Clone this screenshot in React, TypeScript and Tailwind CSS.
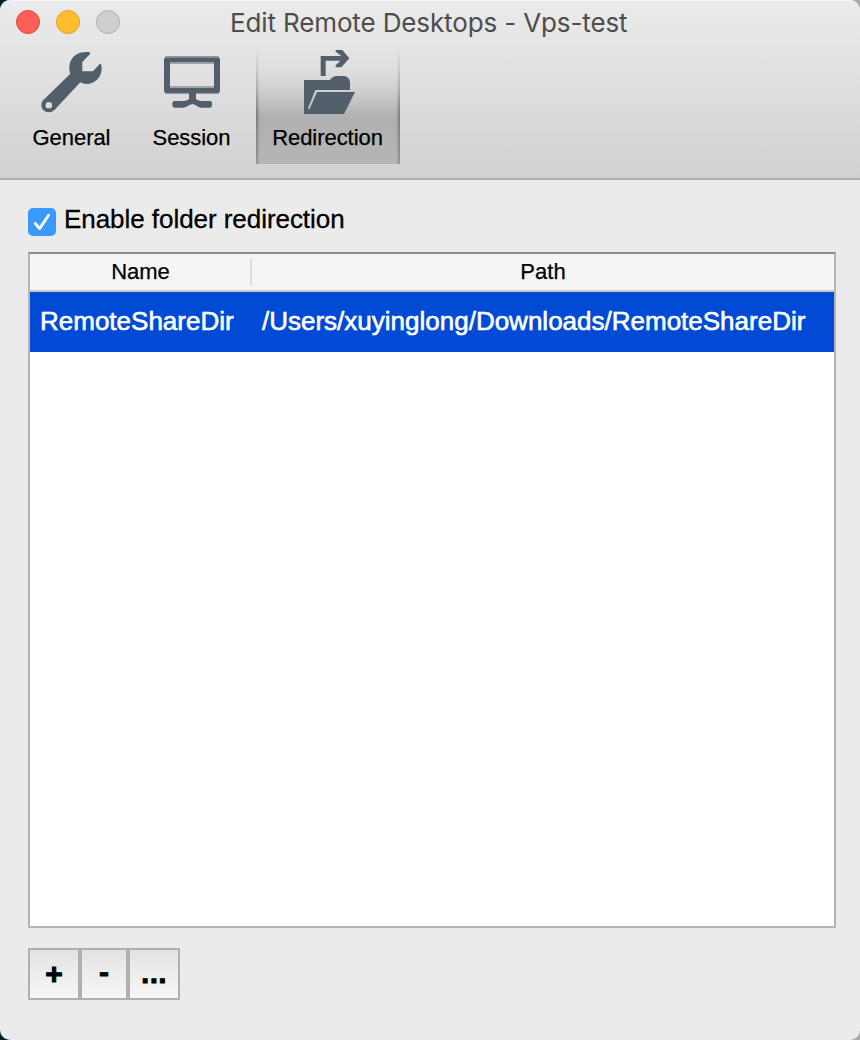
import React from "react";

function Wrench() {
  return (
    <svg className="block h-16 w-16" viewBox="120 150 192 192" fill="#535e6b">
      <path
        fillRule="evenodd"
        d="M270 157C246 153 225 161 214 179C206 194 207 207 211 221L131 299C122 307 122 320 129 329C139 339 154 339 164 329L241 247C257 255 276 253 290 240C303 228 308 210 303 192H299L279 214H247V186L270 162ZM141 307h11l4 4v10l-4 4h-11l-4-4v-10z"
      />
    </svg>
  );
}

function Monitor() {
  return (
    <svg className="block h-16 w-16" viewBox="60 30 192 192" fill="#535e6b">
      <path fill="#8d949b" d="M76 48h160v6H76zM76 156h160v6H76z" />
      <path
        fillRule="evenodd"
        d="M75 53h162l3 3v98l-3 4H75l-3-4V56zM90 66v78h132V66z"
      />
      <path fill="#9da2a8" d="M90 66h132v6H90zM90 138h132v6H90z" />
      <path d="M147 157h21v20c5 5 12 6 20 6h24c6 4 6 16 0 20h-29c-10-1-17-10-26-11-9 1-16 10-26 11h-29c-7-4-7-16 0-20h25c8 0 15-1 20-6z" />
    </svg>
  );
}

function FolderRedirect() {
  return (
    <svg className="block h-16 w-16" viewBox="168 30 192 192" fill="#535e6b">
      <path d="M242 108V48h62L287 35V30h20l21 25-24 27h-17v-6l14-14h-44v46z" />
      <path d="M192 120h78c6-8 12-12 20-12h22c12 2 18 10 18 22v20H226L204 204l4 5L231 156h114L312 222H192z" />
    </svg>
  );
}

type ToolProps = { label: string; active?: boolean; children: React.ReactNode };

function Tool({ label, active, children }: ToolProps) {
  return (
    <button
      className={
        active
          ? "flex h-[114px] w-36 flex-col items-center bg-[linear-gradient(rgba(227,227,227,.95),rgba(227,227,227,0)_55%,rgba(181,181,181,.4)),linear-gradient(90deg,rgba(0,0,0,.28)_0px,rgba(0,0,0,.28)_2px,rgba(0,0,0,.08)_2px,transparent_5px,transparent_139px,rgba(0,0,0,.08)_142px,rgba(0,0,0,.28)_142px),linear-gradient(#e3e3e3,#b0b0b0_60%,#b5b5b5)]"
          : "flex h-[114px] w-[120px] flex-col items-center"
      }
    >
      {children}
      <span className="mt-[10px] pr-px text-[22px] leading-7 tracking-[-0.05px] text-black [-webkit-text-stroke:0.25px_#000]">{label}</span>
    </button>
  );
}

export default function App() {
  return (
    <div className="h-[1040px] w-[860px] bg-[#04202a] bg-[linear-gradient(90deg,#04202a_50%,#aaaaaa_50%)] font-['Liberation_Sans',Arial,sans-serif] text-black">
      <main className="flex h-full flex-col overflow-hidden rounded-[10px] bg-[#ebebeb]">
        <header className="h-[180px] shrink-0 border-b-2 border-[#b1b1b1] bg-[linear-gradient(#f6f6f6_0px,#ebebeb_2px,#d1d1d1_178px)]">
          <div className="grid h-[50px] grid-cols-[230px_1fr] items-start">
            <div className="flex gap-4 pt-[10px] pl-4">
              <i className="size-6 rounded-full border border-[#e2463f] bg-[#ff5f57]" />
              <i className="size-6 rounded-full border border-[#dfa023] bg-[#ffbd2e]" />
              <i className="size-6 rounded-full border border-[#b0b0b0] bg-[#cecece]" />
            </div>
            <h1 className="pt-[7px] font-[Inter,sans-serif] text-[26px] leading-8 font-normal tracking-[-0.13px] whitespace-nowrap text-[#4d4d4d]">
              Edit Remote Desktops - Vps-test
            </h1>
          </div>
          <nav className="flex pl-3">
            <Tool label="General"><Wrench /></Tool>
            <Tool label="Session"><Monitor /></Tool>
            <div className="w-1" />
            <Tool label="Redirection" active><FolderRedirect /></Tool>
          </nav>
        </header>

        <label className="mt-6 flex h-8 items-start pl-7">
          <span className="mt-1 flex size-7 items-center justify-center rounded-[5px] bg-[#3b99fc]">
            <svg className="size-7" viewBox="0 0 28 28" fill="none" stroke="#fff" strokeWidth="2.9" strokeLinecap="round" strokeLinejoin="round">
              <path d="M7.3 15.5l4.4 5L20.6 7.3" />
            </svg>
          </span>
          <span className="ml-2 text-[26px] leading-[30px] tracking-[-0.05px] [-webkit-text-stroke:0.3px_#000]">Enable folder redirection</span>
        </label>

        <section className="mt-4 ml-7 flex h-[676px] w-[808px] flex-col border-2 border-t-[#8e8e8e] border-r-[#b4b4b4] border-b-[#b4b4b4] border-l-[#b4b4b4] bg-white">
          <div className="flex h-[38px] shrink-0 items-center border-b-2 border-[#c8c8c8] bg-[#f5f5f5] text-center text-[22px] [-webkit-text-stroke:0.25px_#000]">
            <span className="h-7 w-[222px] border-r-2 border-[#dcdcdc] pl-px leading-7">Name</span>
            <span className="h-7 flex-1 leading-7">Path</span>
          </div>
          <div className="flex h-[60px] shrink-0 items-center bg-[#004ad6] pb-0.5 text-[26px] text-white [-webkit-text-stroke:0.6px_#fff]">
            <span className="w-[222px] pl-[10px]">RemoteShareDir</span>
            <span className="pl-[10px]">/Users/xuyinglong/Downloads/RemoteShareDir</span>
          </div>
        </section>

        <div className="mt-5 ml-7 flex text-[30px] leading-none font-bold">
          <button className="flex h-[52px] w-[52px] items-center justify-center border-2 border-[#b0b0b0] bg-linear-to-b from-[#e3e3e3] to-[#f7f7f7] [-webkit-text-stroke:1px_#000]">+</button>
          <button className="flex h-[52px] w-12 items-center justify-center border-2 border-[#b0b0b0] bg-linear-to-b from-[#e3e3e3] to-[#f7f7f7] pb-1 [-webkit-text-stroke:0.8px_#000]">-</button>
          <button className="flex h-[52px] w-[52px] items-center justify-center border-2 border-[#b0b0b0] bg-linear-to-b from-[#e3e3e3] to-[#f7f7f7] pb-0.5 tracking-[0.3px] [-webkit-text-stroke:0.8px_#000]">...</button>
        </div>
      </main>
    </div>
  );
}
